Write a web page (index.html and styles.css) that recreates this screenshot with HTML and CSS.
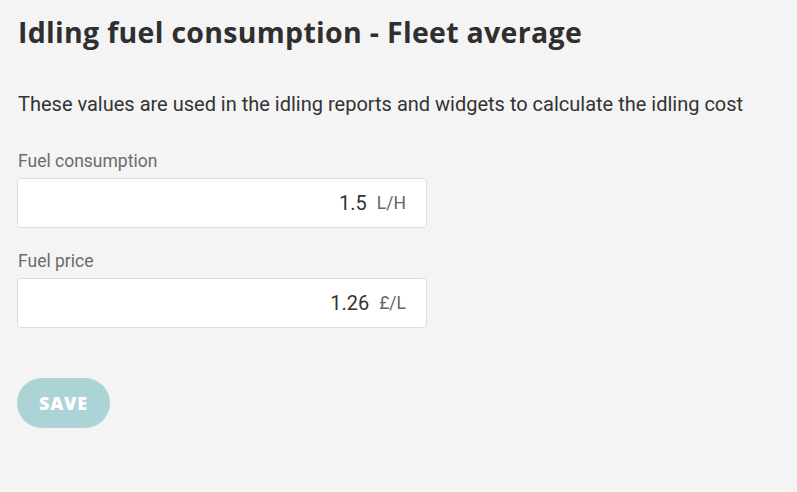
FILE: index.html
```html
<!DOCTYPE html>
<html lang="en">
  <head>
    <meta charset="UTF-8" />
    <meta name="viewport" content="width=device-width, initial-scale=1.0" />
    <title>Idling fuel consumption</title>
    <link rel="stylesheet" href="styles.css">
  </head>
  <body>
    <div class="page">
      <h1>Idling fuel consumption - Fleet average</h1>
      <p class="intro">These values are used in the idling reports and widgets to calculate the idling cost</p>
      <form class="fuel-form">
        <div class="field">
          <label for="consumption">Fuel consumption</label>
          <div class="input-box">
            <input id="consumption" type="text" value="1.5" />
            <span class="unit">L/H</span>
          </div>
        </div>
        <div class="field">
          <label for="price">Fuel price</label>
          <div class="input-box">
            <input id="price" type="text" value="1.26" />
            <span class="unit">£/L</span>
          </div>
        </div>
        <div class="btn-container">
          <button type="submit" class="save-btn" disabled>Save</button>
        </div>
      </form>
    </div>
  </body>
</html>
```

FILE: styles.css
```css
body {
  margin: 0;
  background: #f4f4f4;
  font-family: Roboto, "Liberation Sans", sans-serif;
  color: #333;
}

.page {
  padding: 14px 17px 0 18px;
}

h1 {
  font-family: "Open Sans", "Liberation Sans", sans-serif;
  font-weight: 700;
  font-size: 28.5px;
  line-height: 36px;
  letter-spacing: 0.3px;
  color: #2f2f2f;
  margin: 0;
}

.intro {
  font-size: 20px;
  line-height: 24px;
  margin: 42px 0 0;
}

.fuel-form {
  margin-top: 35px;
}

.field {
  margin-bottom: 23px;
}

label {
  display: block;
  font-size: 17.5px;
  line-height: 20px;
  color: #6b6b6b;
  margin-bottom: 7px;
}

.input-box {
  display: flex;
  align-items: center;
  width: 388px;
  height: 48px;
  margin-left: -1px;
  padding-right: 20px;
  background: #fff;
  border: 1px solid #dcdce6;
  border-radius: 4px;
}

input {
  flex: 1;
  min-width: 0;
  border: none;
  outline: none;
  background: none;
  text-align: right;
  font-family: inherit;
  font-size: 20px;
  color: #333;
  padding: 0;
}

.unit {
  margin-left: 10px;
  font-size: 17.5px;
  color: #666;
}

.btn-container {
  margin-top: 50px;
}

.save-btn {
  margin-left: -1px;
  width: 93px;
  height: 50px;
  border: none;
  border-radius: 25px;
  background: #acd4d7;
  color: #fff;
  font-family: "Open Sans", "Liberation Sans", sans-serif;
  font-weight: 800;
  font-size: 18px;
  letter-spacing: 0.8px;
  text-transform: uppercase;
  cursor: pointer;
}
```
